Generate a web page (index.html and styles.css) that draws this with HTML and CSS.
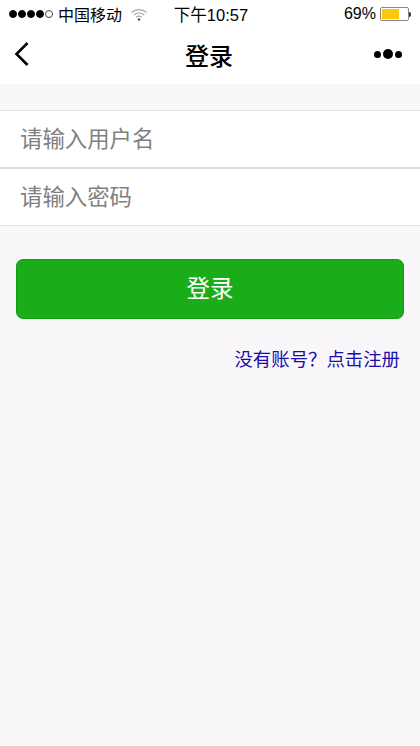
FILE: index.html
```html
<!DOCTYPE html>
<html lang="zh-CN">
<head>
    <meta charset="UTF-8">
    <meta name="viewport" content="width=device-width, initial-scale=1.0">
    <title>登录</title>
    <link rel="stylesheet" href="styles.css">
</head>
<body>
    <div class="status-bar">
        <div class="status-left">
            <div class="signal">
                <span class="dot"></span><span class="dot"></span><span class="dot"></span><span class="dot"></span><span class="dot empty"></span>
            </div>
            <span class="carrier">中国移动</span>
            <svg class="wifi" width="18" height="13" viewBox="0 0 16 12">
                <path d="M1 4.2C5 .6 11 .6 15 4.2" fill="none" stroke="#a8a8a8" stroke-width="1.1"/>
                <path d="M3.2 6.4C6 4 10 4 12.8 6.4" fill="none" stroke="#a8a8a8" stroke-width="1.1"/>
                <path d="M5.4 8.5C6.9 7.4 9.1 7.4 10.6 8.5" fill="none" stroke="#a8a8a8" stroke-width="1.1"/>
                <circle cx="8" cy="10.6" r="1.2" fill="#555"/>
            </svg>
        </div>
        <div class="status-time">下午10:57</div>
        <div class="status-right">
            <span class="percent">69%</span>
            <div class="battery"><div class="battery-level"></div></div>
            <div class="battery-tip"></div>
        </div>
    </div>

    <div class="nav-bar">
        <svg class="back" width="16" height="26" viewBox="0 0 16 26">
            <path d="M13.5 2L2.5 13l11 11" fill="none" stroke="#000" stroke-width="2.6"/>
        </svg>
        <div class="nav-title">登录</div>
        <div class="more">
            <span class="more-dot"></span><span class="more-dot big"></span><span class="more-dot"></span>
        </div>
    </div>

    <div class="form">
        <div class="field">请输入用户名</div>
        <div class="field second">请输入密码</div>
    </div>

    <div class="btn-login">登录</div>

    <div class="register"><a href="#">没有账号？点击注册</a></div>
</body>
</html>
```

FILE: styles.css
```css
html, body {
    height: 100%;
}
body {
    margin: 0;
    background-color: #f9f7fa;
    font-family: "Liberation Sans", "Noto Sans CJK SC", sans-serif;
    color: #000;
    overflow: hidden;
}
.status-bar {
    height: 28px;
    background-color: #fff;
    display: grid;
    grid-template-columns: 1fr auto 1fr;
    align-items: center;
    padding: 0 9px 0 9px;
    font-size: 16px;
}
.status-left {
    display: flex;
    align-items: center;
}
.signal {
    display: flex;
    gap: 1px;
}
.dot {
    width: 8px;
    height: 8px;
    border-radius: 50%;
    background-color: #000;
    border: 1px solid #000;
    box-sizing: border-box;
}
.dot.empty {
    background-color: #fff;
    border-color: #444;
}
.carrier {
    margin-left: 5px;
}
.wifi {
    margin-left: 8px;
}
.status-time {
    font-size: 16.5px;
    margin-left: 2px;
}
.status-right {
    display: flex;
    align-items: center;
    justify-content: flex-end;
}
.percent {
    margin-right: 4px;
}
.battery {
    width: 29px;
    height: 14px;
    border: 1px solid #888;
    border-radius: 2px;
    box-sizing: border-box;
    padding: 1px;
    background-color: #fff;
}
.battery-level {
    width: 69%;
    height: 100%;
    background-color: #fbc80e;
}
.battery-tip {
    width: 2px;
    height: 5px;
    background-color: #333;
    border-radius: 0 2px 2px 0;
}
.nav-bar {
    height: 56px;
    box-sizing: border-box;
    background-color: #fff;
    display: grid;
    grid-template-columns: 1fr auto 1fr;
    align-items: center;
    padding: 0 17px 4px 15px;
}
.back {
    margin-left: -1px;
}
.nav-title {
    font-size: 24px;
    font-weight: 500;
}
.more {
    display: flex;
    align-items: center;
    justify-content: flex-end;
    gap: 2px;
    margin-right: 1px;
}
.more-dot {
    width: 7px;
    height: 7px;
    border-radius: 50%;
    background-color: #000;
}
.more-dot.big {
    width: 10px;
    height: 10px;
}
.form {
    margin-top: 26px;
    background-color: #fff;
    border-top: 1px solid #e2e1e4;
    border-bottom: 1px solid #e2e1e4;
}
.field {
    height: 56px;
    line-height: 58px;
    padding-left: 20px;
    font-size: 22.4px;
    color: #808080;
}
.field.second {
    border-top: 2px solid #d9d9d9;
}
.btn-login {
    margin: 33px 16px 0 16px;
    height: 60px;
    line-height: 58px;
    box-sizing: border-box;
    background-color: #1aad19;
    border: 1px solid #179b16;
    border-radius: 7px;
    color: #fff;
    font-size: 23.5px;
    text-align: center;
}
.register {
    margin-top: 28px;
    padding-right: 20px;
    text-align: right;
    font-size: 18.4px;
    line-height: 26px;
}
.register a {
    color: #1a0dab;
    text-decoration: none;
}
```
